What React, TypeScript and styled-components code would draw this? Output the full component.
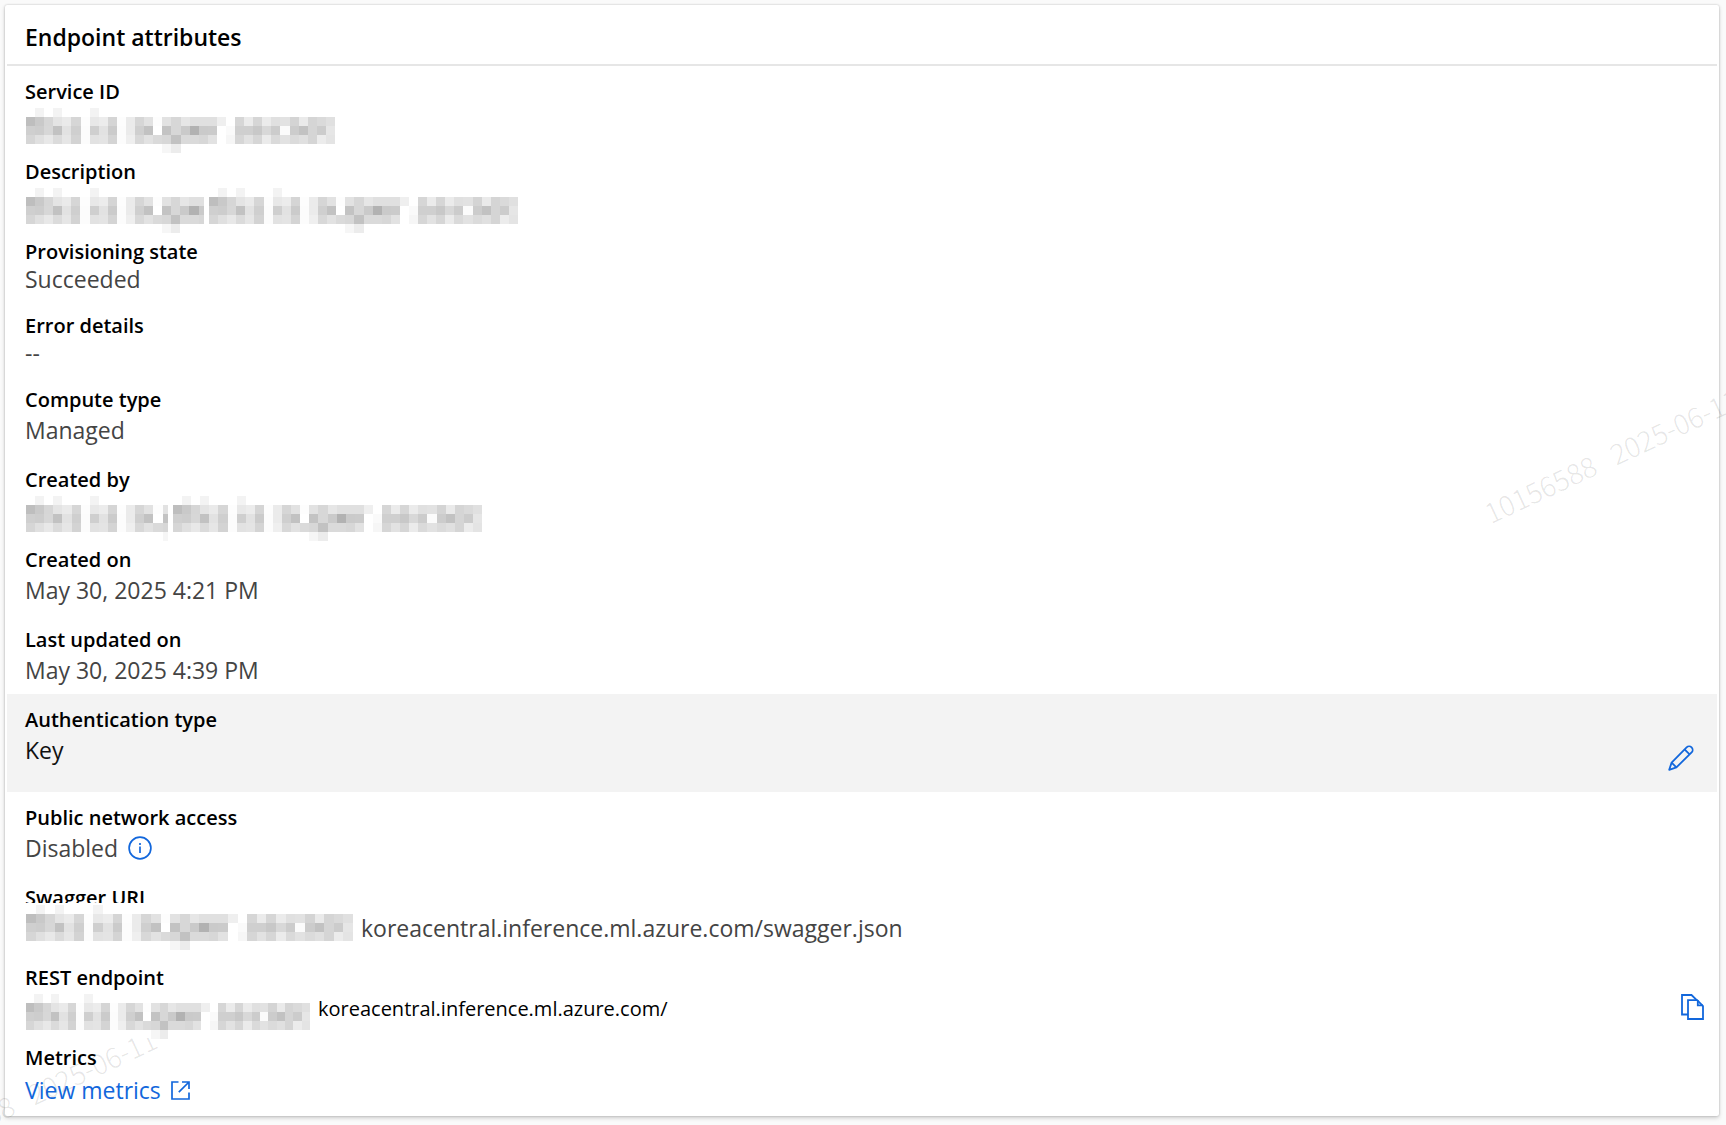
import React from "react";
import styled, { createGlobalStyle } from "styled-components";

const GlobalStyle = createGlobalStyle`
  *, *::before, *::after { box-sizing: border-box; }
  body {
    margin: 0;
    background: #fafafa;
    color: #000;
    font-family: "Segoe UI", "Open Sans", "Noto Sans", sans-serif;
  }
`;

const Page = styled.main`
  position: relative;
  min-height: 100vh;
  padding: 5px 7px 9px 5px;
  overflow: hidden;
`;

const Card = styled.section`
  padding: 0 2px;
  background: #fff;
  border-radius: 2px;
  box-shadow: 0 0 2px rgba(0, 0, 0, 0.24), 0 2px 4px rgba(0, 0, 0, 0.18);
`;

const CardHeader = styled.header`
  padding: 16px 18px 11px;
  border-bottom: 2px solid #e6e6e6;
`;

const Title = styled.h2`
  margin: 0;
  font-size: 23px;
  line-height: 32px;
  font-weight: 600;
`;

const Attributes = styled.dl`
  margin: 0;
`;

const Row = styled.div<{ $highlighted?: boolean }>`
  display: flex;
  justify-content: space-between;
  padding: 10px 18px ${(p) => (p.$highlighted ? 26 : 8)}px;
  background: ${(p) => (p.$highlighted ? "#f3f3f3" : "transparent")};
`;

const Field = styled.div`
  display: flex;
  flex-direction: column;
`;

const Label = styled.dt<{ $clipped?: boolean }>`
  height: ${(p) => (p.$clipped ? 21 : 30)}px;
  overflow: ${(p) => (p.$clipped ? "hidden" : "visible")};
  font-size: 20px;
  line-height: 32px;
  font-weight: 600;
`;

const Value = styled.dd<{ $height?: number; $strong?: boolean }>`
  display: flex;
  align-items: center;
  gap: 10px;
  height: ${(p) => p.$height ?? 32}px;
  margin: 0;
  color: ${(p) => (p.$strong ? "#111" : "#444")};
  font-size: 23px;
  line-height: 32px;
`;

const MaskedValue = styled.dd<{ $height?: number }>`
  display: flex;
  gap: 5px;
  height: ${(p) => p.$height ?? 32}px;
  margin: 0;
  padding: 2px 0 0 1px;
`;

const UrlTail = styled.span<{ $small?: boolean }>`
  align-self: ${(p) => (p.$small ? "flex-start" : "flex-end")};
  padding-left: 3px;
  color: ${(p) => (p.$small ? "#000" : "#444")};
  font-size: ${(p) => (p.$small ? 20 : 23)}px;
  line-height: ${(p) => (p.$small ? 30 : 32)}px;
`;

const Mosaic = styled.svg`
  display: block;
  flex: none;
  height: 45px;
`;

const IconButton = styled.button`
  display: flex;
  align-self: flex-end;
  padding: 0;
  border: 0;
  background: none;
  color: #1267dc;
  cursor: pointer;
`;

const InfoButton = styled(IconButton)`
  align-self: center;
`;

const EditButton = styled(IconButton)`
  margin: 0 5px -5px 0;
`;

const CopyButton = styled(IconButton)`
  margin: 0 -5px 4px 0;
`;

const MetricsLink = styled.a`
  display: flex;
  align-items: center;
  gap: 10px;
  color: #1267dc;
  text-decoration: none;
`;

const WatermarkArea = styled.div<{ $side: "left" | "right" }>`
  position: absolute;
  ${(p) =>
    p.$side === "right"
      ? "right: 0; top: 380px; width: 260px; height: 160px;"
      : "left: 0; top: 1038px; width: 260px; height: 87px;"}
  overflow: hidden;
  pointer-events: none;
`;

const WatermarkText = styled.span<{ $x: number; $y: number }>`
  position: absolute;
  left: ${(p) => p.$x}px;
  top: ${(p) => p.$y}px;
  color: rgba(0, 0, 0, 0.1);
  font-family: "Noto Sans CJK KR", sans-serif;
  font-size: 28px;
  font-weight: 300;
  line-height: 30px;
  white-space: pre;
  transform: rotate(-25deg);
  transform-origin: 0 100%;
`;

/* Grey level of each mosaic cell, two hex digits per cell. */
const MOSAIC_ROWS = [
  "fff3fff3fffffff3ffffffffffffffffffffffffffffffffffffffffffffffffffff",
  "bec9d6e4ead6fde8ecd5fdebd6e2fde2d7e6e0e0e0efffd6ebd6ebe0e2d4ead5dae0",
  "cfcdd7c2e2cffccfe2cbfcebcfc2ffc3d7cab2cacbfffacfcfc8d8ccfbccc2d5cce6",
  "d6e0e8dbe6d3fce2e4d4fcefd8e2dad7c2dadad7e2fff6d6e2d6ebdae2dbe0d5ece4",
  "fffffffffffffffffffffffffffffff6ecffffffffffffffffffffffffffffffffff",
];
const MOSAIC_COLS = 34;

function Redacted({ width = 309, cols = MOSAIC_COLS }: { width?: number; cols?: number }) {
  return (
    <Mosaic
      width={width}
      viewBox={`0 0 ${cols} 5`}
      preserveAspectRatio="none"
      shapeRendering="crispEdges"
      role="img"
      aria-label="Redacted"
    >
      {MOSAIC_ROWS.map((row, y) =>
        Array.from({ length: MOSAIC_COLS }, (_, x) => {
          const level = row.slice(x * 2, x * 2 + 2);
          return level === "ff" ? null : (
            <rect key={`${x}-${y}`} x={x} y={y} width={1} height={1} fill={`#${level}${level}${level}`} />
          );
        })
      )}
    </Mosaic>
  );
}

function InfoIcon() {
  return (
    <svg width="24" height="24" viewBox="0 0 24 24" fill="none" stroke="currentColor" strokeWidth="1.7">
      <circle cx="12" cy="12" r="10.9" />
      <path d="M12 10.5v6.5" />
      <path d="M12 7v2" />
    </svg>
  );
}

function PencilIcon() {
  return (
    <svg width="26" height="26" viewBox="0 0 26 26" fill="none" stroke="currentColor" strokeWidth="1.8" strokeLinejoin="round">
      <path d="M1.2 24.8 3.6 17.6 18.6 2.4a3.5 3.5 0 0 1 5 5L8.4 22.4Z" />
      <path d="M16.6 4.4 21.6 9.4M3.6 17.6 8.4 22.4" />
    </svg>
  );
}

function CopyIcon() {
  return (
    <svg width="23" height="26" viewBox="0 0 23 26" fill="none" stroke="currentColor" strokeWidth="1.8">
      <path d="M7 20.5H1V1H10.5L15.8 6.2" />
      <path d="M7 6.2H16.2L22 12V25H7Z" />
      <path d="M16.8 6.2V11.4H22" />
    </svg>
  );
}

function ExternalIcon() {
  return (
    <svg width="19" height="19" viewBox="0 0 19 19" fill="none" stroke="currentColor" strokeWidth="1.7">
      <path d="M7.5 1H1V18H18V11.5" />
      <path d="M11 1H18V8M18 1 7.8 11.2" />
    </svg>
  );
}

function TextRow({ label, value, height }: { label: string; value: string; height?: number }) {
  return (
    <Row>
      <Field>
        <Label>{label}</Label>
        <Value $height={height}>{value}</Value>
      </Field>
    </Row>
  );
}

export default function App() {
  return (
    <>
      <GlobalStyle />
      <Page>
        <Card>
          <CardHeader>
            <Title>Endpoint attributes</Title>
          </CardHeader>
          <Attributes>
            <Row>
              <Field>
                <Label>Service ID</Label>
                <MaskedValue>
                  <Redacted />
                </MaskedValue>
              </Field>
            </Row>
            <Row>
              <Field>
                <Label>Description</Label>
                <MaskedValue>
                  <Redacted width={178} cols={19.6} />
                  <Redacted />
                </MaskedValue>
              </Field>
            </Row>
            <TextRow label="Provisioning state" value="Succeeded" height={26} />
            <TextRow label="Error details" value="--" height={26} />
            <TextRow label="Compute type" value="Managed" />
            <Row>
              <Field>
                <Label>Created by</Label>
                <MaskedValue>
                  <Redacted width={142} cols={15.6} />
                  <Redacted />
                </MaskedValue>
              </Field>
            </Row>
            <TextRow label="Created on" value="May 30, 2025 4:21 PM" />
            <TextRow label="Last updated on" value="May 30, 2025 4:39 PM" />
            <Row $highlighted>
              <Field>
                <Label>Authentication type</Label>
                <Value $strong>Key</Value>
              </Field>
              <EditButton type="button" aria-label="Edit authentication type">
                <PencilIcon />
              </EditButton>
            </Row>
            <Row>
              <Field>
                <Label>Public network access</Label>
                <Value>
                  Disabled
                  <InfoButton type="button" aria-label="About public network access">
                    <InfoIcon />
                  </InfoButton>
                </Value>
              </Field>
            </Row>
            <Row>
              <Field>
                <Label $clipped>Swagger URI</Label>
                <MaskedValue $height={41}>
                  <Redacted width={327} />
                  <UrlTail>koreacentral.inference.ml.azure.com/swagger.json</UrlTail>
                </MaskedValue>
              </Field>
            </Row>
            <Row>
              <Field>
                <Label>REST endpoint</Label>
                <MaskedValue>
                  <Redacted width={284} />
                  <UrlTail $small>koreacentral.inference.ml.azure.com/</UrlTail>
                </MaskedValue>
              </Field>
              <CopyButton type="button" aria-label="Copy REST endpoint">
                <CopyIcon />
              </CopyButton>
            </Row>
            <Row>
              <Field>
                <Label>Metrics</Label>
                <Value $height={36}>
                  <MetricsLink href="#metrics">
                    View metrics
                    <ExternalIcon />
                  </MetricsLink>
                </Value>
              </Field>
            </Row>
          </Attributes>
        </Card>
        <WatermarkArea $side="right" aria-hidden="true">
          <WatermarkText $x={26} $y={117}>{"10156588   2025-06-11"}</WatermarkText>
        </WatermarkArea>
        <WatermarkArea $side="left" aria-hidden="true">
          <WatermarkText $x={-90} $y={99}>{"10156588   2025-06-11"}</WatermarkText>
        </WatermarkArea>
      </Page>
    </>
  );
}
